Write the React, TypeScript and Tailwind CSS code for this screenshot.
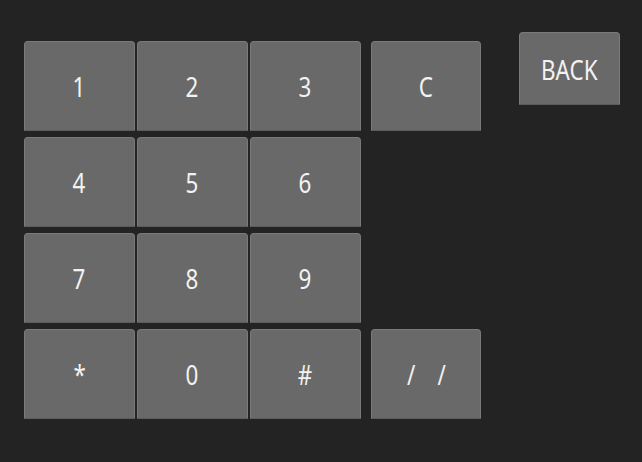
const keys = ["1", "2", "3", "4", "5", "6", "7", "8", "9", "*", "0", "#"];

function Key({ children, className = "" }: { children: React.ReactNode; className?: string }) {
  return (
    <button
      type="button"
      className={`flex items-center justify-center rounded-t-[4px] rounded-b-[1px] border border-[#7a7a7a] border-b-[#5c5c5c] bg-[#696969] text-[28px] text-[#f2f2f2] ${className}`}
      style={{ fontFamily: '"Noto Sans", "Open Sans", sans-serif' }}
    >
      <span className="scale-x-80 leading-none">{children}</span>
    </button>
  );
}

export default function App() {
  return (
    <div className="flex h-[462px] w-[642px] bg-[#232323] pl-[24px] pt-[32px]">
      <div className="mt-[9px] grid grid-cols-[111px_111px_111px] grid-rows-[90px_90px_90px_90px] gap-x-[2px] gap-y-[6px]">
        {keys.map((k) => (
          <Key key={k}>{k}</Key>
        ))}
      </div>
      <div className="mt-[9px] ml-[10px] flex h-[378px] w-[110px] flex-col justify-between">
        <Key className="h-[90px]">C</Key>
        <Key className="h-[90px]">
          <span className="flex gap-[28px]">
            <span>/</span>
            <span>/</span>
          </span>
        </Key>
      </div>
      <Key className="ml-[38px] h-[73px] w-[101px]">BACK</Key>
    </div>
  );
}
